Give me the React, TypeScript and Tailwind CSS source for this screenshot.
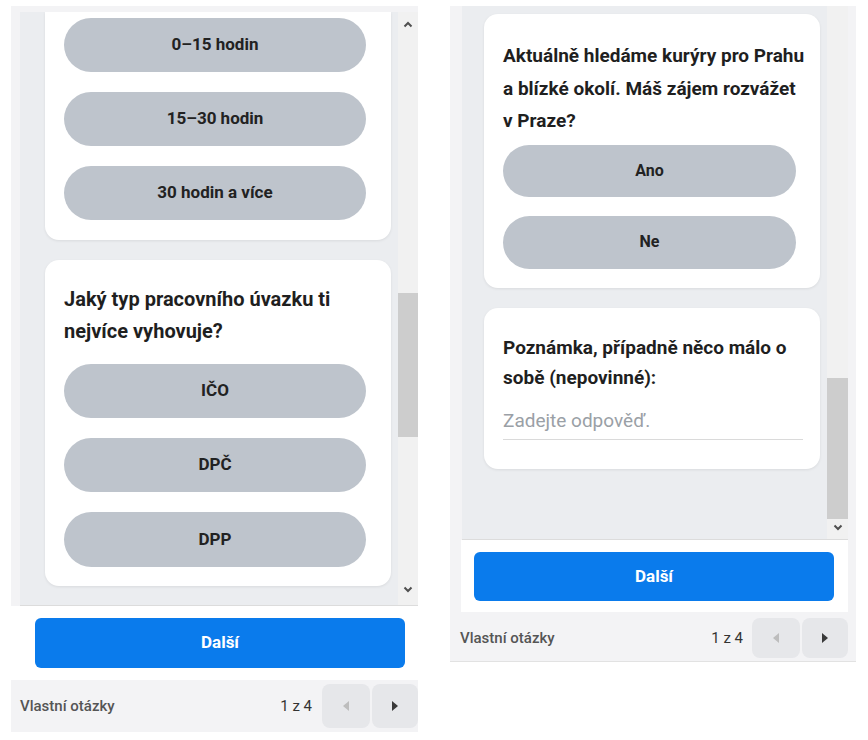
import React from "react";

const Chevron = ({ up }: { up?: boolean }) => (
  <svg width="10" height="7" viewBox="0 0 10 7" className="block">
    <path
      d={up ? "M1.5 5.5 L5 2 L8.5 5.5" : "M1.5 1.5 L5 5 L8.5 1.5"}
      fill="none"
      stroke="#505050"
      strokeWidth="2"
    />
  </svg>
);

const Opt = ({ label, h = "h-[54px]", size = "text-[17px]" }: { label: string; h?: string; size?: string }) => (
  <div
    className={`${h} rounded-full bg-[#bec4cc] flex items-center justify-center ${size} font-bold text-[#222]`}
  >
    {label}
  </div>
);

const NavButtons = ({ h }: { h: string }) => (
  <div className="flex gap-[2px]">
    <div className={`w-[48px] ${h} rounded-lg bg-[#e6e7ea] flex items-center justify-center`}>
      <svg width="6" height="10" viewBox="0 0 6 10">
        <path d="M6 0 L0 5 L6 10 Z" fill="#bdbdbd" />
      </svg>
    </div>
    <div className={`w-[46px] ${h} rounded-lg bg-[#e6e7ea] flex items-center justify-center`}>
      <svg width="6" height="10" viewBox="0 0 6 10">
        <path d="M0 0 L6 5 L0 10 Z" fill="#3a3a3a" />
      </svg>
    </div>
  </div>
);

export default function App() {
  return (
    <div
      className="w-[868px] h-[740px] bg-white flex items-start pt-[6px] pl-[11px] gap-[32px]"
      style={{ fontFamily: "Roboto, 'Noto Sans', Arial, sans-serif" }}
    >
      {/* LEFT PANEL */}
      <div className="w-[407px] h-[726px] bg-[#f3f3f5] flex flex-col">
        <div className="pt-[6px] pl-[9px] flex flex-col">
          <div className="h-[594px] flex border-b border-[#dcdcdc]">
            <div className="flex-1 bg-[#ebedf0] overflow-hidden pl-[25px] pr-[7px] flex flex-col gap-[20px]">
              <div className="bg-white rounded-b-[14px] shadow-[0_1px_3px_rgba(0,0,0,0.08)] pl-[19px] pr-[25px] pt-[6px] pb-[20px] flex flex-col gap-[20px]">
                <Opt label="0–15 hodin" />
                <Opt label="15–30 hodin" />
                <Opt label="30 hodin a více" />
              </div>
              <div className="bg-white rounded-[14px] shadow-[0_1px_3px_rgba(0,0,0,0.08)] pl-[19px] pr-[25px] pt-[23px] pb-[19px] flex flex-col gap-[20px] shrink-0">
                <div className="text-[20px] leading-[32px] font-bold text-[#1f1f1f] mb-[-3px]">
                  Jaký typ pracovního úvazku ti nejvíce vyhovuje?
                </div>
                <Opt label="IČO" />
                <Opt label="DPČ" />
                <Opt label="DPP" h="h-[55px]" />
              </div>
            </div>
            <div className="w-[20px] bg-[#f1f1f1] flex flex-col items-center">
              <div className="h-[20px] flex items-end justify-center pb-[4px]">
                <Chevron up />
              </div>
              <div className="h-[261px]" />
              <div className="w-[20px] h-[144px] bg-[#cdcdcd]" />
              <div className="flex-1" />
              <div className="h-[20px] flex items-start justify-center pt-[1px]">
                <Chevron />
              </div>
            </div>
          </div>
        </div>
        <div className="bg-white h-[74px] pl-[24px] pr-[13px] pt-[12px]">
          <div className="h-[50px] rounded-[6px] bg-[#0a7bec] flex items-center justify-center text-white text-[17px] font-bold">
            Další
          </div>
        </div>
        <div className="h-[52px] flex items-center pl-[9px]">
          <div className="flex-1 text-[15px] font-medium text-[#555]">Vlastní otázky</div>
          <div className="text-[15px] text-[#333] mr-[10px]">1 z 4</div>
          <NavButtons h="h-[44px]" />
        </div>
      </div>

      {/* RIGHT PANEL */}
      <div className="w-[406px] h-[656px] bg-[#f3f3f5] flex flex-col">
        <div className="h-[534px] flex ml-[12px] mr-[8px] border-b border-[#dcdcdc]">
          <div className="flex-1 bg-[#ebedf0] overflow-hidden pl-[22px] pr-[7px] pt-[8px] flex flex-col gap-[20px]">
            <div className="bg-white rounded-[14px] shadow-[0_1px_3px_rgba(0,0,0,0.08)] pl-[19px] pr-[24px] pt-[26px] pb-[19px] flex flex-col gap-[19px] shrink-0">
              <div className="text-[19px] leading-[32.5px] font-bold text-[#1f1f1f] mb-[-12px] mr-[-12px]">
                Aktuálně hledáme kurýry pro Prahu a blízké okolí. Máš zájem rozvážet v Praze?
              </div>
              <Opt label="Ano" h="h-[52px]" size="text-[16px]" />
              <Opt label="Ne" h="h-[53px]" size="text-[16px]" />
            </div>
            <div className="bg-white rounded-[14px] shadow-[0_1px_3px_rgba(0,0,0,0.08)] pl-[19px] pr-[17px] pt-[25px] pb-[29px] flex flex-col shrink-0">
              <div className="text-[19px] leading-[30px] font-bold text-[#1f1f1f] mr-[-6px]">
                Poznámka, případně něco málo o sobě (nepovinné):
              </div>
              <div className="mt-[16px] pb-[6px] border-b border-[#dadada] text-[19px] leading-[24px] text-[#9aa0a6]">
                Zadejte odpověď.
              </div>
            </div>
          </div>
          <div className="w-[21px] bg-[#f1f1f1] flex flex-col">
            <div className="h-[372px]" />
            <div className="h-[141px] bg-[#cdcdcd]" />
            <div className="flex-1 flex items-start justify-center pt-[5px]">
              <Chevron />
            </div>
          </div>
        </div>
        <div className="bg-white h-[72px] ml-[11px] mr-[8px] pl-[13px] pr-[14px] pt-[12px]">
          <div className="h-[49px] rounded-[6px] bg-[#0a7bec] flex items-center justify-center text-white text-[17px] font-bold">
            Další
          </div>
        </div>
        <div className="h-[50px] flex items-center pl-[10px] pr-[8px] pt-[3px] border-b border-[#e2e2e2]">
          <div className="flex-1 text-[15px] font-medium text-[#555]">Vlastní otázky</div>
          <div className="text-[15px] text-[#333] mr-[9px]">1 z 4</div>
          <NavButtons h="h-[40px]" />
        </div>
      </div>
    </div>
  );
}
